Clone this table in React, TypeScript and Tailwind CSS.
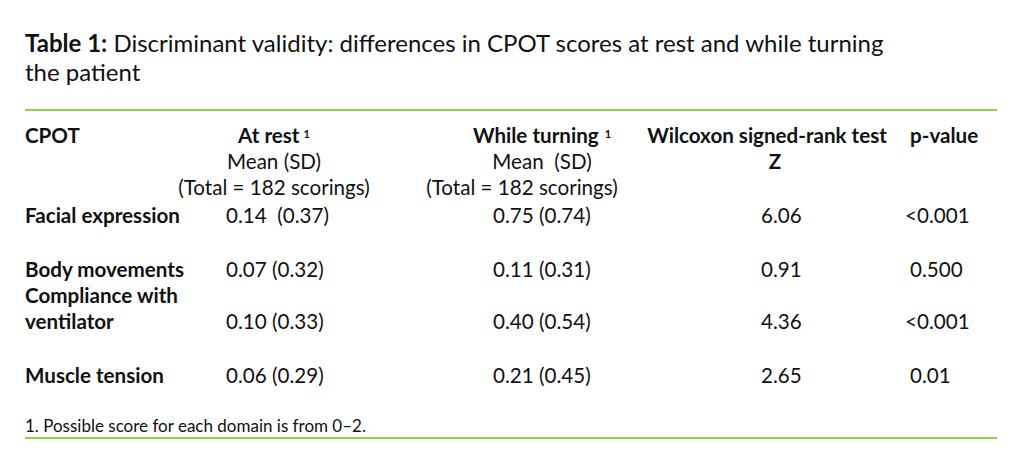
const rows = [
  { label: ['Facial expression'], rest: '0.14\u00a0 (0.37)', turn: '0.75 (0.74)', z: '6.06', p: '<0.001', pad: false, gap: true },
  { label: ['Body movements'], rest: '0.07 (0.32)', turn: '0.11 (0.31)', z: '0.91', p: '0.500', pad: true, gap: false },
  { label: ['Compliance with', 'ventilator'], rest: '0.10 (0.33)', turn: '0.40 (0.54)', z: '4.36', p: '<0.001', pad: false, gap: true },
  { label: ['Muscle tension'], rest: '0.06 (0.29)', turn: '0.21 (0.45)', z: '2.65', p: '0.01', pad: true, gap: false },
];

export default function App() {
  return (
    <div className="w-[1024px] h-[461px] bg-white text-[#111] font-['Lato','Liberation_Sans',sans-serif] pl-[25px] pt-[28px] overflow-hidden">
      <h1 className="text-[24px] leading-[29px] w-[890px]">
        <span className="font-bold">Table 1:</span> Discriminant validity: differences in CPOT scores at rest and while turning the patient
      </h1>

      <div className="w-[972px] mt-[23px] border-t-2 border-[#92d050]">
        {/* header */}
        <div className="flex text-[20.6px] leading-[26px] mt-[11px] whitespace-nowrap">
          <div className="w-[139px] font-bold">CPOT</div>
          <div className="w-[220px] flex flex-col items-center">
            <div className="font-bold">
              At rest<sup className="text-[11px] ml-[4px] relative -top-[5px]">1</sup>
            </div>
            <div>Mean (SD)</div>
            <div>(Total = 182 scorings)</div>
          </div>
          <div className="w-[210px] ml-[53px] flex flex-col items-center">
            <div className="font-bold">
              While turning<sup className="text-[11px] ml-[6px] relative -top-[5px]">1</sup>
            </div>
            <div>Mean&nbsp; (SD)</div>
            <div className="mr-[40px]">(Total = 182 scorings)</div>
          </div>
          <div className="w-[238px] ml-[1px] flex flex-col items-center font-bold">
            <div>Wilcoxon signed-rank test</div>
            <div className="ml-[16px]">Z</div>
          </div>
          <div className="ml-[24px] font-bold">p-value</div>
        </div>

        {/* body */}
        <div className="mt-[2px] text-[20.6px] leading-[26px] whitespace-nowrap">
          {rows.map((r) => (
            <div key={r.label[0]} className={`flex items-end ${r.gap ? 'mb-[28px]' : ''}`}>
              <div className="w-[201px] font-bold">
                {r.label.map((l) => (
                  <div key={l}>{l}</div>
                ))}
              </div>
              <div className="w-[267px]">{r.rest}</div>
              <div className="w-[268px]">{r.turn}</div>
              <div className="w-[144px]">{r.z}</div>
              <div className={r.pad ? 'pl-[5px]' : ''}>{r.p}</div>
            </div>
          ))}
        </div>

        <p className="mt-[27px] text-[17px] leading-[21px]">1. Possible score for each domain is from 0–2.</p>
      </div>
      <div className="w-[972px] mt-[1px] border-t-2 border-[#92d050]" />
    </div>
  );
}
